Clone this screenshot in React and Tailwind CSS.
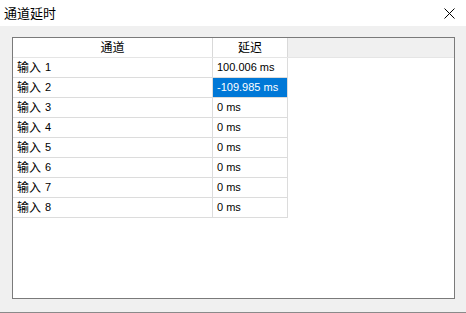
const rows = [
  { name: '输入', num: '1', delay: '100.006 ms' },
  { name: '输入', num: '2', delay: '-109.985 ms', selected: true },
  { name: '输入', num: '3', delay: '0 ms' },
  { name: '输入', num: '4', delay: '0 ms' },
  { name: '输入', num: '5', delay: '0 ms' },
  { name: '输入', num: '6', delay: '0 ms' },
  { name: '输入', num: '7', delay: '0 ms' },
  { name: '输入', num: '8', delay: '0 ms' },
];

const font = { fontFamily: '"Liberation Sans", "Noto Sans CJK SC", sans-serif' };

export default function App() {
  return (
    <div
      className="w-[466px] h-[313px] flex flex-col bg-[#f0f0f0] border-b border-[#8a8a8a] text-black overflow-hidden"
      style={font}
    >
      {/* title bar */}
      <div className="h-[26px] shrink-0 bg-white flex items-center justify-between pl-[4px] pr-[11px]">
        <span className="text-[13px] leading-none">通道延时</span>
        <svg width="11" height="11" viewBox="0 0 11 11" className="shrink-0">
          <path d="M0.5 0.5 L10.5 10.5 M10.5 0.5 L0.5 10.5" stroke="#000" strokeWidth="1" />
        </svg>
      </div>

      {/* table */}
      <div className="ml-[12px] mt-[11px] w-[443px] h-[262px] border border-[#7a7a7a] bg-white flex flex-col text-[11px]">
        <div className="h-[20px] flex bg-[#f0f0f0] border-b border-[#e5e5e5] text-[12px]">
          <div className="w-[200px] bg-white border-r border-[#d9d9d9] flex items-center justify-center">通道</div>
          <div className="w-[75px] bg-white border-r border-[#d9d9d9] flex items-center justify-center">延迟</div>
        </div>
        {rows.map((r) => (
          <div key={r.num} className="h-[20px] flex">
            <div className="w-[200px] border-r border-b border-[#dcdcdc] flex items-center gap-[4px] pl-[4px]">
              <span className="text-[12px]">{r.name}</span>
              <span>{r.num}</span>
            </div>
            <div className="w-[75px] border-r border-b border-[#dcdcdc] flex">
              <div
                className={
                  r.selected
                    ? 'flex-1 flex items-center pl-[4px] bg-[#0078d7] text-white'
                    : 'flex-1 flex items-center pl-[4px]'
                }
              >
                {r.delay}
              </div>
            </div>
          </div>
        ))}
      </div>
    </div>
  );
}
